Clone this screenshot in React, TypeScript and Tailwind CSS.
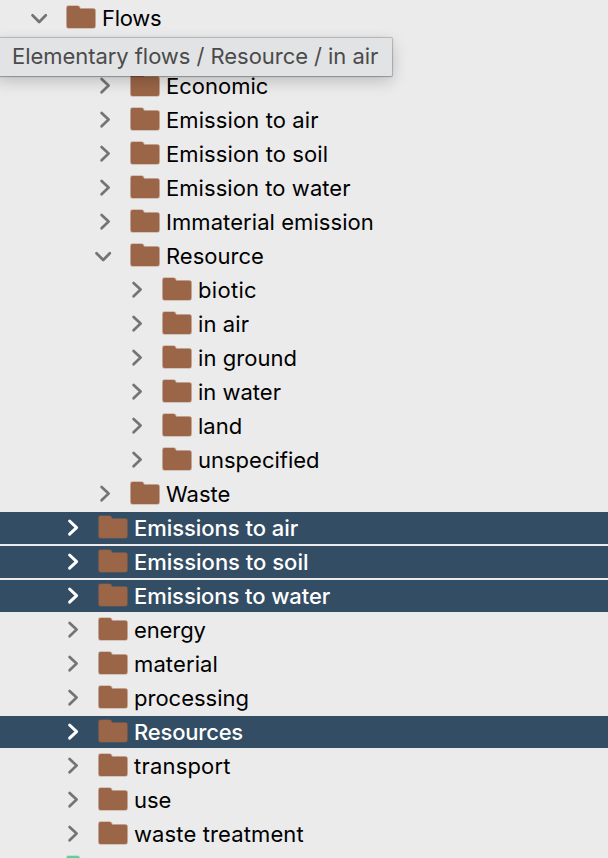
type Item = {
  label: string;
  depth: number;
  open?: boolean;
  selected?: boolean;
  tracking?: string;
};

const wide = 'tracking-[0.1px]';

const topItems: Item[] = [{ label: 'Flows', depth: 0, open: true, tracking: 'tracking-[-0.25px]' }];

const items: Item[] = [
  { label: 'Economic', depth: 2 },
  { label: 'Emission to air', depth: 2, tracking: wide },
  { label: 'Emission to soil', depth: 2, tracking: wide },
  { label: 'Emission to water', depth: 2, tracking: 'tracking-[0.06px]' },
  { label: 'Immaterial emission', depth: 2, tracking: 'tracking-[0.07px]' },
  { label: 'Resource', depth: 2, open: true },
  { label: 'biotic', depth: 3, tracking: 'tracking-[0.3px]' },
  { label: 'in air', depth: 3, tracking: wide },
  { label: 'in ground', depth: 3, tracking: 'tracking-[0.06px]' },
  { label: 'in water', depth: 3 },
  { label: 'land', depth: 3 },
  { label: 'unspecified', depth: 3 },
  { label: 'Waste', depth: 2 },
  { label: 'Emissions to air', depth: 1, selected: true, tracking: 'tracking-[-0.04px]' },
  { label: 'Emissions to soil', depth: 1, selected: true },
  { label: 'Emissions to water', depth: 1, selected: true, tracking: 'tracking-[-0.08px]' },
  { label: 'energy', depth: 1, tracking: 'tracking-[-0.1px]' },
  { label: 'material', depth: 1, tracking: 'tracking-[0.12px]' },
  { label: 'processing', depth: 1 },
  { label: 'Resources', depth: 1, selected: true, tracking: 'tracking-[-0.2px]' },
  { label: 'transport', depth: 1, tracking: 'tracking-[0.2px]' },
  { label: 'use', depth: 1 },
  { label: 'waste treatment', depth: 1, tracking: 'tracking-[0.12px]' },
];

const indents = ['pl-7', 'pl-[60px]', 'pl-[92px]', 'pl-[124px]'];

function Chevron({ open, selected }: { open?: boolean; selected?: boolean }) {
  return (
    <svg
      className={`h-8 w-[38px] shrink-0 ${selected ? 'text-white' : 'text-[#747474]'}`}
      viewBox="0 0 38 32"
      fill="none"
      stroke="currentColor"
      strokeWidth={selected ? 3 : 2.7}
      strokeLinecap="round"
      strokeLinejoin="round"
    >
      <path d={open ? 'M4.5 13.2 11.2 20 17.8 13.2' : 'M9.6 9 16.6 15.6 9.6 22.2'} />
    </svg>
  );
}

function Folder({ color }: { color: string }) {
  return (
    <svg className={`h-8 w-[30px] shrink-0 ${color}`} viewBox="0 0 30 32" fill="currentColor">
      <path
        d="M2.4 4.1H11.6Q13.4 4.1 14 6.7H27.3Q29.2 6.7 29.2 8.6V24.1Q29.2 26 27.3 26H2.6Q.8 26 .8 24.1V6Q.8 4.1 2.4 4.1Z"
        stroke="currentColor"
        strokeOpacity=".4"
        strokeWidth="1.6"
      />
    </svg>
  );
}

function Row({ item }: { item: Item }) {
  return (
    <div
      className={`flex h-8 shrink-0 items-center ${indents[item.depth]} ${
        item.selected ? 'bg-[#334d64] font-medium text-white' : 'text-black'
      }`}
    >
      <Chevron open={item.open} selected={item.selected} />
      <Folder color="text-[#9b6547]" />
      <span className={`ml-1.5 whitespace-pre leading-8 ${item.tracking ?? 'tracking-normal'}`}>{item.label}</span>
    </div>
  );
}

export default function App() {
  return (
    <div className="relative h-[858px] w-[608px] overflow-hidden bg-[#ebebeb] font-['Inter',sans-serif] text-[22px]">
      <div className="flex flex-col gap-0.5 pt-0.5">
        {topItems.map((item) => (
          <Row key={item.label} item={item} />
        ))}
        <div className="h-8 shrink-0" />
        {items.map((item) => (
          <Row key={item.label} item={item} />
        ))}
        <div className="flex h-8 shrink-0 pl-[66px]">
          <Folder color="text-[#5fcf98]" />
        </div>
      </div>
      <div className="absolute -left-1 top-[38px] flex h-[38px] w-[396px] items-center rounded-[1px] bg-[#e2e3e5] pl-4 text-[#4b4b4b] shadow-[0_0_1px_0.5px_rgba(0,0,0,0.2),0_1px_1px_rgba(0,0,0,0.12),0_5px_16px_rgba(0,0,0,0.2)]">
        <span className="-mt-0.5 whitespace-pre tracking-[-0.05px]">Elementary flows / Resource / in air</span>
      </div>
    </div>
  );
}
